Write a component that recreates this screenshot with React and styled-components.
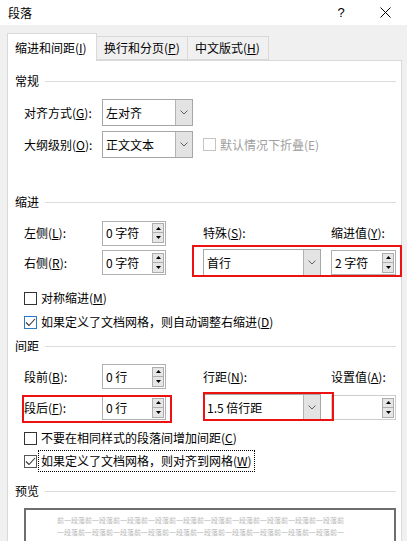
import React from 'react';
import styled, { createGlobalStyle } from 'styled-components';

const GlobalStyle = createGlobalStyle`
  html, body {
    margin: 0;
    padding: 0;
    background: #f0f0f0;
  }
  * {
    box-sizing: border-box;
  }
`;

const Dialog = styled.div`
  width: 407px;
  height: 541px;
  overflow: hidden;
  background: #f0f0f0;
  font-family: "Noto Sans CJK SC", "Noto Sans", sans-serif;
  font-size: 12px;
  line-height: 16px;
  color: #000;
`;

const TitleBar = styled.div`
  height: 25px;
  background: #fff;
  display: flex;
  align-items: center;
  padding-left: 8px;
`;

const Title = styled.div`
  flex: 1;
  font-size: 12px;
`;

const TitleButton = styled.div`
  width: 44px;
  height: 25px;
  display: flex;
  align-items: center;
  justify-content: center;
  font-family: "Liberation Sans", sans-serif;
  font-size: 13px;
`;

const Body = styled.div`
  padding: 8px 5px 0 7px;
`;

const TabRow = styled.div`
  display: flex;
  align-items: flex-end;
  height: 27px;
`;

const Tab = styled.div`
  position: relative;
  z-index: ${p => (p.$active ? 1 : 0)};
  width: ${p => p.$w}px;
  height: ${p => (p.$active ? 28 : 24)}px;
  margin-bottom: ${p => (p.$active ? -1 : 0)}px;
  padding-left: 7px;
  display: flex;
  align-items: center;
  padding-top: ${p => (p.$active ? 1 : 0)}px;
  background: ${p => (p.$active ? '#fff' : '#f0f0f0')};
  border: 1px solid #d9d9d9;
  border-bottom: ${p => (p.$active ? 'none' : '1px solid #d9d9d9')};
  border-left: ${p => (p.$first ? '1px solid #d9d9d9' : 'none')};
  white-space: nowrap;
`;

const Panel = styled.div`
  position: relative;
  height: 500px;
  background: #fff;
  border: 1px solid #d9d9d9;
  padding: 12px 5px 0 7px;
`;

const SectionHeader = styled.div`
  display: flex;
  align-items: center;
  gap: 6px;
  height: 16px;
  margin-top: ${p => p.$mt || 0}px;
  &::after {
    content: '';
    flex: 1;
    height: 1px;
    background: #dcdcdc;
  }
`;

const FormGrid = styled.div`
  display: grid;
  grid-template-columns: 78px 101px 128px 65px;
  grid-template-rows: ${p => p.$rows};
  row-gap: ${p => p.$gap}px;
  align-items: center;
  margin: ${p => p.$mt}px 0 0 9px;
`;

const Label = styled.div`
  white-space: nowrap;
  color: ${p => (p.$disabled ? '#a0a0a0' : '#000')};
`;

const Combo = styled.div`
  width: ${p => p.$w}px;
  height: 27px;
  display: flex;
  border: 1px solid #a6a6a6;
  background: #fff;
`;

const ComboText = styled.div`
  flex: 1;
  display: flex;
  align-items: center;
  padding-left: 3px;
  white-space: nowrap;
`;

const ComboButton = styled.div`
  width: 17px;
  display: flex;
  align-items: center;
  justify-content: center;
  background: #e3e3e3;
  border-left: 1px solid #b4b4b4;
`;

const Spin = styled.div`
  width: ${p => p.$w}px;
  height: 25px;
  display: flex;
  align-items: center;
  border: 1px solid ${p => (p.$disabled ? '#cccccc' : '#b0b0b0')};
  background: #fff;
  padding-right: 1px;
`;

const SpinText = styled.div`
  flex: 1;
  padding-left: 3px;
  white-space: nowrap;
`;

const SpinButtons = styled.div`
  display: flex;
  flex-direction: column;
`;

const SpinButton = styled.div`
  width: 12px;
  height: 10px;
  display: flex;
  align-items: center;
  justify-content: center;
  background: #e6e6e6;
  border: 1px solid #adadad;
  & + & {
    border-top: none;
    height: 10px;
  }
`;

const Checks = styled.div`
  display: flex;
  flex-direction: column;
  gap: ${p => p.$gap}px;
  margin: ${p => p.$mt}px 0 0 9px;
`;

const CheckRow = styled.div`
  display: flex;
  align-items: center;
  gap: 4px;
  height: 16px;
  white-space: nowrap;
  color: ${p => (p.$disabled ? '#a0a0a0' : '#000')};
`;

const Box = styled.div`
  width: 13px;
  height: 13px;
  flex: none;
  display: flex;
  align-items: center;
  justify-content: center;
  background: #fff;
  border: 1px solid ${p => p.$border || '#333'};
`;

const CheckText = styled.span`
  outline: ${p => (p.$focus ? '1px dotted #000' : 'none')};
  outline-offset: 2px;
`;

const Preview = styled.div`
  margin: 9px 0 0 9px;
  width: 372px;
  height: 60px;
  border: 2px solid #6e6e6e;
  padding: 4px 0 0 31px;
  font-size: 7px;
  line-height: 12px;
  color: #b8b8b8;
  white-space: nowrap;
`;

const Annotation = styled.div`
  position: absolute;
  left: ${p => p.$x}px;
  top: ${p => p.$y}px;
  width: ${p => p.$w}px;
  height: ${p => p.$h}px;
  border: 2px solid #ee1111;
  pointer-events: none;
`;

function Chevron() {
  return (
    <svg width="8" height="5" viewBox="0 0 8 5">
      <polyline points="0.5,0.5 4,4 7.5,0.5" fill="none" stroke="#606060" strokeWidth="1" />
    </svg>
  );
}

function Arrow({ down }) {
  return (
    <svg width="5" height="3" viewBox="0 0 5 3">
      <polygon points={down ? '0,0 5,0 2.5,3' : '0,3 5,3 2.5,0'} fill="#000" />
    </svg>
  );
}

function Dropdown({ w, value }) {
  return (
    <Combo $w={w}>
      <ComboText>{value}</ComboText>
      <ComboButton><Chevron /></ComboButton>
    </Combo>
  );
}

function SpinBox({ w = 64, value, disabled }) {
  return (
    <Spin $w={w} $disabled={disabled}>
      <SpinText>{value}</SpinText>
      <SpinButtons>
        <SpinButton><Arrow /></SpinButton>
        <SpinButton><Arrow down /></SpinButton>
      </SpinButtons>
    </Spin>
  );
}

function Check({ checked, disabled, focus, border, children }) {
  return (
    <CheckRow $disabled={disabled}>
      <Box $border={disabled ? '#c4c4c4' : border}>
        {checked && (
          <svg width="11" height="11" viewBox="0 0 11 11">
            <polyline points="1,5.5 4,8.5 10,2" fill="none" stroke="#333" strokeWidth="1.1" />
          </svg>
        )}
      </Box>
      <CheckText $focus={focus}>{children}</CheckText>
    </CheckRow>
  );
}

export default function App() {
  const line1 = '前一段落'.repeat(10) + '前';
  const line2 = '一段落前'.repeat(10) + '一';

  return (
    <>
      <GlobalStyle />
      <Dialog>
        <TitleBar>
          <Title>段落</Title>
          <TitleButton>?</TitleButton>
          <TitleButton>
            <svg width="11" height="11" viewBox="0 0 11 11">
              <path d="M0.5 0.5 L10.5 10.5 M10.5 0.5 L0.5 10.5" stroke="#000" strokeWidth="1" />
            </svg>
          </TitleButton>
        </TitleBar>
        <Body>
          <TabRow>
            <Tab $active $first $w={90}>缩进和间距(<u>I</u>)</Tab>
            <Tab $w={91}>换行和分页(<u>P</u>)</Tab>
            <Tab $w={81}>中文版式(<u>H</u>)</Tab>
          </TabRow>
          <Panel>
            <SectionHeader>常规</SectionHeader>
            <FormGrid $mt={10} $rows="27px 27px" $gap={5}>
              <Label>对齐方式(<u>G</u>):</Label>
              <Dropdown w={91} value="左对齐" />
              <div />
              <div />
              <Label>大纲级别(<u>O</u>):</Label>
              <Dropdown w={91} value="正文文本" />
              <Check disabled>默认情况下折叠(E)</Check>
              <div />
            </FormGrid>

            <SectionHeader $mt={36}>缩进</SectionHeader>
            <FormGrid $mt={10} $rows="26px 27px" $gap={3}>
              <Label>左侧(<u>L</u>):</Label>
              <SpinBox value="0 字符" />
              <Label>特殊(<u>S</u>):</Label>
              <Label>缩进值(<u>Y</u>):</Label>
              <Label>右侧(<u>R</u>):</Label>
              <SpinBox value="0 字符" />
              <Dropdown w={118} value="首行" />
              <SpinBox w={65} value="2 字符" />
            </FormGrid>
            <Checks $mt={14} $gap={8}>
              <Check>对称缩进(<u>M</u>)</Check>
              <Check checked border="#2b79c2">如果定义了文档网格，则自动调整右缩进(<u>D</u>)</Check>
            </Checks>

            <SectionHeader $mt={8}>间距</SectionHeader>
            <FormGrid $mt={10} $rows="25px 25px" $gap={6}>
              <Label>段前(<u>B</u>):</Label>
              <SpinBox value="0 行" />
              <Label>行距(<u>N</u>):</Label>
              <Label>设置值(<u>A</u>):</Label>
              <Label>段后(<u>F</u>):</Label>
              <SpinBox value="0 行" />
              <Dropdown w={118} value="1.5 倍行距" />
              <SpinBox w={65} value="" disabled />
            </FormGrid>
            <Checks $mt={10} $gap={7}>
              <Check>不要在相同样式的段落间增加间距(<u>C</u>)</Check>
              <Check checked focus border="#555">如果定义了文档网格，则对齐到网格(<u>W</u>)</Check>
            </Checks>

            <SectionHeader $mt={14}>预览</SectionHeader>
            <Preview>
              <div>{line1}</div>
              <div>{line2}</div>
            </Preview>

            <Annotation $x={184} $y={184} $w={210} $h={32} />
            <Annotation $x={14} $y={334} $w={150} $h={28} />
            <Annotation $x={195} $y={331} $w={131} $h={29} />
          </Panel>
        </Body>
      </Dialog>
    </>
  );
}
